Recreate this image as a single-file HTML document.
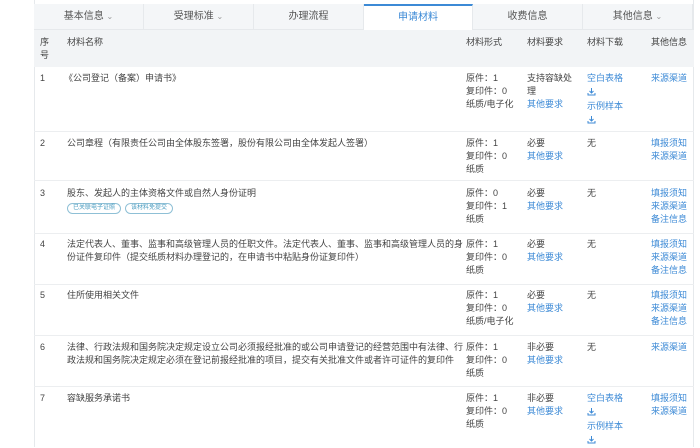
<!DOCTYPE html>
<html><head><meta charset="utf-8"><style>
*{margin:0;padding:0;box-sizing:border-box}
body{width:700px;height:447px;background:#fff;position:relative;overflow:hidden;font-family:"Liberation Sans","Noto Sans CJK SC",sans-serif;font-size:9px;color:#444}
.a{position:absolute;white-space:nowrap;line-height:13px}
.b{color:#3c8ad6}
.tab{position:absolute;top:4px;height:26px;line-height:26px;text-align:center;font-size:10px;color:#555;background:#f4f6f8;border-right:1px solid #e6e9ec;border-bottom:1px solid #e6e9ec}
.tab i{font-style:normal;color:#999;font-size:8px}
.hl{position:absolute;left:34px;width:660px;height:1px;background:#eceef0}
.dl{display:block;height:13px}
.dl svg{display:block;margin-top:2px}
.tag{display:inline-block;border:1px solid #8fc0d6;border-radius:8px;color:#4a9cc0;font-size:6px;line-height:9px;padding:0 5px;margin-right:4px}
</style></head><body>
<div style="position:absolute;left:34px;top:0;width:1px;height:447px;background:#e6e9ec"></div>
<div style="position:absolute;left:693px;top:0;width:1px;height:447px;background:#e6e9ec"></div>
<div class="tab" style="left:34px;width:110px">基本信息 <i>⌄</i></div>
<div class="tab" style="left:144px;width:110px">受理标准 <i>⌄</i></div>
<div class="tab" style="left:254px;width:110px">办理流程</div>
<div class="tab" style="left:364px;width:109px;background:#fff;border-top:2px solid #3c8ad6;border-bottom:none;color:#3c8ad6;line-height:24px">申请材料</div>
<div class="tab" style="left:473px;width:110px">收费信息</div>
<div class="tab" style="left:583px;width:110px">其他信息 <i>⌄</i></div>
<div style="position:absolute;left:34px;top:30px;width:660px;height:37px;background:#f2f4f6"></div>
<div class="a" style="left:40px;top:36px">序<br>号</div>
<div class="a" style="left:67px;top:36px">材料名称</div>
<div class="a" style="left:466px;top:36px">材料形式</div>
<div class="a" style="left:527px;top:36px">材料要求</div>
<div class="a" style="left:587px;top:36px">材料下载</div>
<div class="a" style="left:651px;top:36px">其他信息</div>

<div class="hl" style="top:131px"></div><div class="hl" style="top:180px"></div><div class="hl" style="top:233px"></div><div class="hl" style="top:284px"></div><div class="hl" style="top:335px"></div><div class="hl" style="top:386px"></div>

<!-- row1 -->
<div class="a" style="left:40px;top:72px">1</div>
<div class="a" style="left:64px;top:72px">《公司登记（备案）申请书》</div>
<div class="a" style="left:466px;top:72px">原件：1<br>复印件：0<br>纸质/电子化</div>
<div class="a" style="left:527px;top:72px">支持容缺处<br>理<br><span class="b">其他要求</span></div>
<div class="a b" style="left:587px;top:72px">空白表格<span class="dl"><svg width="9" height="9" viewBox="0 0 9 9" fill="none" stroke="#3c8ad6" stroke-width="1"><path d="M4.5 1v5M2.5 4l2 2 2-2M1 6v2h7V6"/></svg></span>示例样本<span class="dl"><svg width="9" height="9" viewBox="0 0 9 9" fill="none" stroke="#3c8ad6" stroke-width="1"><path d="M4.5 1v5M2.5 4l2 2 2-2M1 6v2h7V6"/></svg></span></div>
<div class="a b" style="left:651px;top:72px">来源渠道</div>
<!-- row2 -->
<div class="a" style="left:40px;top:137px">2</div>
<div class="a" style="left:67px;top:137px">公司章程（有限责任公司由全体股东签署，股份有限公司由全体发起人签署）</div>
<div class="a" style="left:466px;top:137px">原件：1<br>复印件：0<br>纸质</div>
<div class="a" style="left:527px;top:137px">必要<br><span class="b">其他要求</span></div>
<div class="a" style="left:587px;top:137px">无</div>
<div class="a b" style="left:651px;top:137px">填报须知<br>来源渠道</div>
<!-- row3 -->
<div class="a" style="left:40px;top:187px">3</div>
<div class="a" style="left:67px;top:187px">股东、发起人的主体资格文件或自然人身份证明<br><span class="tag">已关联电子证照</span><span class="tag">该材料免提交</span></div>
<div class="a" style="left:466px;top:187px">原件：0<br>复印件：1<br>纸质</div>
<div class="a" style="left:527px;top:187px">必要<br><span class="b">其他要求</span></div>
<div class="a" style="left:587px;top:187px">无</div>
<div class="a b" style="left:651px;top:187px">填报须知<br>来源渠道<br>备注信息</div>
<!-- row4 -->
<div class="a" style="left:40px;top:238px">4</div>
<div class="a" style="left:67px;top:238px">法定代表人、董事、监事和高级管理人员的任职文件。法定代表人、董事、监事和高级管理人员的身<br>份证件复印件（提交纸质材料办理登记的，在申请书中粘贴身份证复印件）</div>
<div class="a" style="left:466px;top:238px">原件：1<br>复印件：0<br>纸质</div>
<div class="a" style="left:527px;top:238px">必要<br><span class="b">其他要求</span></div>
<div class="a" style="left:587px;top:238px">无</div>
<div class="a b" style="left:651px;top:238px">填报须知<br>来源渠道<br>备注信息</div>
<!-- row5 -->
<div class="a" style="left:40px;top:289px">5</div>
<div class="a" style="left:67px;top:289px">住所使用相关文件</div>
<div class="a" style="left:466px;top:289px">原件：1<br>复印件：0<br>纸质/电子化</div>
<div class="a" style="left:527px;top:289px">必要<br><span class="b">其他要求</span></div>
<div class="a" style="left:587px;top:289px">无</div>
<div class="a b" style="left:651px;top:289px">填报须知<br>来源渠道<br>备注信息</div>
<!-- row6 -->
<div class="a" style="left:40px;top:341px">6</div>
<div class="a" style="left:67px;top:341px">法律、行政法规和国务院决定规定设立公司必须报经批准的或公司申请登记的经营范围中有法律、行<br>政法规和国务院决定规定必须在登记前报经批准的项目，提交有关批准文件或者许可证件的复印件</div>
<div class="a" style="left:466px;top:341px">原件：1<br>复印件：0<br>纸质</div>
<div class="a" style="left:527px;top:341px">非必要<br><span class="b">其他要求</span></div>
<div class="a" style="left:587px;top:341px">无</div>
<div class="a b" style="left:651px;top:341px">来源渠道</div>
<!-- row7 -->
<div class="a" style="left:40px;top:392px">7</div>
<div class="a" style="left:67px;top:392px">容缺服务承诺书</div>
<div class="a" style="left:466px;top:392px">原件：1<br>复印件：0<br>纸质</div>
<div class="a" style="left:527px;top:392px">非必要<br><span class="b">其他要求</span></div>
<div class="a b" style="left:587px;top:392px">空白表格<span class="dl"><svg width="9" height="9" viewBox="0 0 9 9" fill="none" stroke="#3c8ad6" stroke-width="1"><path d="M4.5 1v5M2.5 4l2 2 2-2M1 6v2h7V6"/></svg></span>示例样本<span class="dl"><svg width="9" height="9" viewBox="0 0 9 9" fill="none" stroke="#3c8ad6" stroke-width="1"><path d="M4.5 1v5M2.5 4l2 2 2-2M1 6v2h7V6"/></svg></span></div>
<div class="a b" style="left:651px;top:392px">填报须知<br>来源渠道</div>
</body></html>
